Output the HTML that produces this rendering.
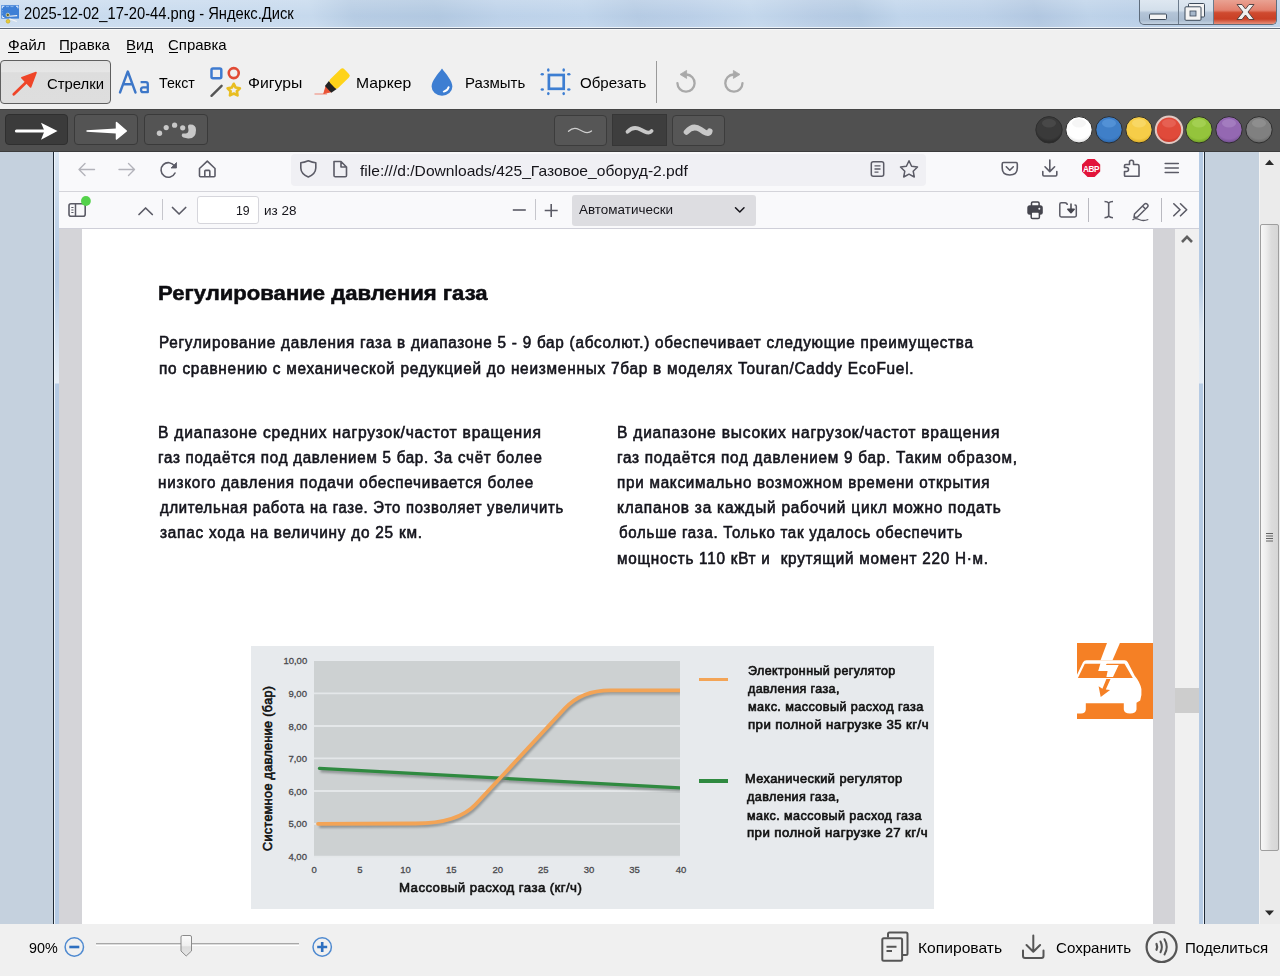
<!DOCTYPE html>
<html><head><meta charset="utf-8"><title>Яндекс.Диск</title>
<style>
html,body{margin:0;padding:0}
body{width:1280px;height:976px;position:relative;overflow:hidden;background:#f0f0f0;font-family:"Liberation Sans",sans-serif}
.t{position:absolute;white-space:pre;line-height:1;transform-origin:0 0}
.r{position:absolute}
.s{position:absolute;overflow:visible}
</style></head><body>
<div class="r" style="left:0px;top:0px;width:1280px;height:27px;background:linear-gradient(72deg,#c8daee 0px,#c3d7ec 300px,#b2c9e2 340px,#adc5df 420px,#b9cfe8 480px,#bcd2ea 560px,#b1c8e2 610px,#b6cce6 660px,#c0d5eb 720px,#b3c9e3 780px,#aec6e0 820px,#bcd2ea 860px,#b8cee7 940px,#adc4df 990px,#bad0e8 1040px,#b4cbe5 1100px,#bed3ea 1280px);"></div><div class="r" style="left:0px;top:0px;width:1280px;height:27px;background:linear-gradient(rgba(255,255,255,0.22),rgba(255,255,255,0.05) 60%,rgba(255,255,255,0.12));"></div><div class="r" style="left:0px;top:27px;width:1280px;height:1px;background:#eef4fa;"></div><div class="r" style="left:0px;top:28px;width:1280px;height:1px;background:#5d6776;"></div><div class="r" style="left:0px;top:29px;width:1280px;height:1px;background:#fafafa;"></div><svg class="s" style="left:0px;top:3px;" width="24" height="22" viewBox="0 3 24 22"><rect x="1.2" y="5.2" width="17.8" height="13.4" fill="#3d7fd6"/><path d="M2.3 8.3V6.3H4.3M16 6.3H17.9V8.3M2.3 15.5V17.5H4.3" fill="none" stroke="#e8f2ff" stroke-width="1"/><path d="M6 6.6H9M10.5 6.6H13.5M2.6 10.2V11.2M2.6 12.5V13.5" stroke="#8fbaf0" stroke-width="0.9"/><path d="M9.3 16.2L17.2 15.6M9.3 18.8L16.8 21.6" stroke="#f4f4f4" stroke-width="1.1"/><circle cx="7.8" cy="14.9" r="1.7" fill="#6b6420" stroke="#f0f0d0" stroke-width="0.7"/><circle cx="8" cy="21.3" r="1.9" fill="#e6cc3a" stroke="#c2a420" stroke-width="0.6"/></svg><div class="t" id="t1" style="left:24.34px;top:6.36px;font-size:16px;color:#000;transform:scaleX(0.9201);">2025-12-02_17-20-44.png - Яндекс.Диск</div><div class="r" style="left:1139px;top:-1px;width:136px;height:25px;border:1px solid #5e6c7c;border-top:none;border-radius:0 0 5px 5px;overflow:hidden;background:linear-gradient(#dfe8f1 0%,#d3dfeb 45%,#b3c4d7 55%,#aabcd0 85%,#c3d2e2 100%)"><div style="position:absolute;left:74px;top:0;width:62px;height:25px;background:linear-gradient(#eaa596 0%,#e2806d 45%,#cf4a2f 55%,#c93f25 80%,#e7907b 100%)"></div><div style="position:absolute;left:38px;top:0;width:1px;height:25px;background:#6c7b8c"></div><div style="position:absolute;left:73px;top:0;width:1px;height:25px;background:#6c7b8c"></div></div><svg class="s" style="left:1140px;top:0px;" width="140" height="26" viewBox="1140 0 140 26"><rect x="1149.5" y="14" width="17" height="5.5" rx="1" fill="#f4f4f4" stroke="#3d4a5a" stroke-width="1"/><rect x="1188.5" y="3.5" width="16" height="13.5" rx="1" fill="#f4f4f4" stroke="#3d4a5a" stroke-width="1"/><rect x="1185" y="6.8" width="16" height="13.5" rx="1" fill="#f4f4f4" stroke="#3d4a5a" stroke-width="1"/><rect x="1190" y="11" width="6" height="5" fill="#a7b8cb" stroke="#3d4a5a" stroke-width="0.8"/><path d="M1237 4.5h5l3.5 4.5l3.5-4.5h5l-6 7.5l6 7.5h-5l-3.5-4.5l-3.5 4.5h-5l6-7.5z" fill="#f0f0f0" stroke="#4a3a3a" stroke-width="0.9"/></svg><div class="t" id="t2" style="left:7.67px;top:37.30px;font-size:15px;color:#000;transform:scaleX(1.0224);">Файл</div><div class="t" id="t3" style="left:59.10px;top:37.30px;font-size:15px;color:#000;transform:scaleX(1.0063);">Правка</div><div class="t" id="t4" style="left:126.48px;top:37.30px;font-size:15px;color:#000;transform:scaleX(0.9998);">Вид</div><div class="t" id="t5" style="left:168.10px;top:37.30px;font-size:15px;color:#000;transform:scaleX(0.9966);">Справка</div><div class="r" style="left:8px;top:51.5px;width:11px;height:1px;background:#000;"></div><div class="r" style="left:60px;top:51.5px;width:9.5px;height:1px;background:#000;"></div><div class="r" style="left:127px;top:51.5px;width:8.5px;height:1px;background:#000;"></div><div class="r" style="left:168.5px;top:51.5px;width:9.5px;height:1px;background:#000;"></div><div class="r" style="left:0px;top:60px;width:109px;height:42px;border:1px solid #5f5f5f;border-radius:4px;background:linear-gradient(#e2e2e2 0%,#e6e6e6 25%,#dddddd 28%,#dedede 100%)"></div><svg class="s" style="left:8px;top:68px;" width="34" height="32" viewBox="8 68 34 32"><path d="M13.8 94.3L28 80.5" stroke="#ef4528" stroke-width="2.8" stroke-linecap="round"/><path d="M21.8 77.8L36 72.6L30.6 87Z" fill="#ef4528" stroke="#ef4528" stroke-width="1.6" stroke-linejoin="round"/></svg><div class="t" id="t6" style="left:47.15px;top:75.80px;font-size:15px;color:#000;transform:scaleX(0.9909);">Стрелки</div><svg class="s" style="left:116px;top:66px;" width="36" height="30" viewBox="116 66 36 30"><path d="M120 92.5L127.8 71.5L135.5 92.5M123.5 84.3H132" fill="none" stroke="#3d77c8" stroke-width="2.4" stroke-linecap="round" stroke-linejoin="round"/><path d="M140.6 82.2H145.8Q147.8 82.2 147.8 84.2V92.2H143.2Q141 92.2 141 89.7Q141 87.3 143.2 87.3H147.8" fill="none" stroke="#3d77c8" stroke-width="2.3" stroke-linejoin="round"/></svg><div class="t" id="t7" style="left:158.57px;top:75.30px;font-size:15px;color:#000;transform:scaleX(0.9494);">Текст</div><svg class="s" style="left:206px;top:62px;" width="40" height="38" viewBox="206 62 40 38"><rect x="211.5" y="68.5" width="9.8" height="9.8" rx="1.5" fill="none" stroke="#3f7bd0" stroke-width="2.5"/><circle cx="233.75" cy="73.1" r="5" fill="none" stroke="#e14b35" stroke-width="2.6"/><path d="M211.5 95.8L221.6 85.8" stroke="#555" stroke-width="2.4" stroke-linecap="round"/><path d="M233.75 83.80L235.69 87.53L239.84 88.22L236.89 91.22L237.51 95.38L233.75 93.50L229.99 95.38L230.61 91.22L227.66 88.22L231.81 87.53Z" fill="none" stroke="#e8be22" stroke-width="2.7" stroke-linejoin="round"/></svg><div class="t" id="t8" style="left:248.15px;top:75.30px;font-size:15px;color:#000;transform:scaleX(1.0502);">Фигуры</div><svg class="s" style="left:312px;top:64px;" width="42" height="34" viewBox="312 64 42 34"><path d="M314.5 94H327" stroke="#f09080" stroke-width="1.1"/><g transform="translate(323.8,93.6) rotate(-44)"><path d="M0 0L6.5 -3.6V3.6Z" fill="#ea5436" stroke="#ea5436" stroke-width="1" stroke-linejoin="round"/><path d="M6 -4.6L12.5 -5.6V5.6L6 4.6Z" fill="#222"/><rect x="12" y="-5.9" width="19.8" height="11.8" rx="2.6" fill="#fed319"/></g></svg><div class="t" id="t9" style="left:356.10px;top:75.30px;font-size:15px;color:#000;transform:scaleX(1.0478);">Маркер</div><svg class="s" style="left:428px;top:64px;" width="28" height="36" viewBox="428 64 28 36"><path d="M442 68.4C446 74 452.4 80.5 452.4 86.6A10.2 8.9 0 0 1 431.6 86.6C431.6 80.5 438 74 442 68.4Z" fill="#3d7ed2"/><path d="M443.8 91.6Q447.6 90.6 448.6 87.2" fill="none" stroke="#fff" stroke-width="2" stroke-linecap="round"/></svg><div class="t" id="t10" style="left:465.10px;top:75.30px;font-size:15px;color:#000;transform:scaleX(0.9986);">Размыть</div><svg class="s" style="left:538px;top:64px;" width="36" height="36" viewBox="538 64 36 36"><rect x="548.9" y="75" width="14.8" height="13.8" fill="none" stroke="#3d7ed2" stroke-width="2.7"/><ellipse cx="548.3" cy="70" rx="1.3" ry="1.7" fill="#3d7ed2"/><ellipse cx="563.7" cy="70" rx="1.3" ry="1.7" fill="#3d7ed2"/><ellipse cx="548.3" cy="93.6" rx="1.3" ry="1.7" fill="#3d7ed2"/><ellipse cx="563.7" cy="93.6" rx="1.3" ry="1.7" fill="#3d7ed2"/><ellipse cx="542.3" cy="74.3" rx="1.7" ry="1.3" fill="#3d7ed2"/><ellipse cx="568.8" cy="74.3" rx="1.7" ry="1.3" fill="#3d7ed2"/><ellipse cx="542.3" cy="89.5" rx="1.7" ry="1.3" fill="#3d7ed2"/><ellipse cx="568.8" cy="89.5" rx="1.7" ry="1.3" fill="#3d7ed2"/></svg><div class="t" id="t11" style="left:579.67px;top:75.30px;font-size:15px;color:#000;transform:scaleX(1.0040);">Обрезать</div><div class="r" style="left:656px;top:61px;width:1px;height:42px;background:#9a9a9a;"></div><svg class="s" style="left:670px;top:66px;" width="80" height="34" viewBox="670 66 80 34"><path d="M677.4 83.1A8.6 8.6 0 1 0 686.4 74.5" fill="none" stroke="#a9a9a9" stroke-width="2.3" stroke-linecap="round"/><path d="M680 74.4L686.6 70.4L686.6 78.4Z" fill="#a9a9a9" stroke="#a9a9a9" stroke-width="0.8" stroke-linejoin="round"/><path d="M742.5 83.1A8.6 8.6 0 1 1 733.5 74.5" fill="none" stroke="#a9a9a9" stroke-width="2.3" stroke-linecap="round"/><path d="M740 74.4L733.4 70.4L733.4 78.4Z" fill="#a9a9a9" stroke="#a9a9a9" stroke-width="0.8" stroke-linejoin="round"/></svg><div class="r" style="left:0px;top:109px;width:1280px;height:43px;background:#505050;"></div><div class="r" style="left:0px;top:109px;width:1280px;height:1px;background:#454545;"></div><div class="r" style="left:0px;top:151px;width:1280px;height:1px;background:#3c3c3c;"></div><div class="r" style="left:5px;top:114px;width:63px;height:31px;background:#3b3b3b;border:1px solid #2f2f2f;border-radius:4px;box-sizing:border-box;"></div><div class="r" style="left:74px;top:114px;width:64px;height:31px;background:#545454;border:1px solid #3a3a3a;border-radius:4px;box-sizing:border-box;"></div><div class="r" style="left:144px;top:114px;width:64px;height:31px;background:#545454;border:1px solid #3a3a3a;border-radius:4px;box-sizing:border-box;"></div><svg class="s" style="left:10px;top:118px;" width="200" height="26" viewBox="10 118 200 26"><path d="M16.5 131H46" stroke="#fff" stroke-width="3.2" stroke-linecap="round"/><path d="M41 122.8L57.5 131L41 139.8L44.5 131Z" fill="#fff"/><path d="M86.5 130.2L116 128.5L116 133.5L86.5 131.8Z" fill="#fff"/><path d="M116.5 122.5L126.3 131L116.5 139Z" fill="#fff" stroke="#fff" stroke-width="1.5" stroke-linejoin="round"/><circle cx="159.5" cy="133.2" r="2.7" fill="#c8c8c8"/><circle cx="166.2" cy="127.6" r="2.6" fill="#c8c8c8"/><circle cx="174.6" cy="125.2" r="2.6" fill="#c8c8c8"/><circle cx="182.7" cy="127.8" r="2.6" fill="#c8c8c8"/><path d="M189.5 124.5Q196 124 196 130Q196 139 188 138.5L183.5 137.5Q180.5 136 182.5 133.5L186 133.5Q188.5 133 188.5 130L188 127Q187.8 124.8 189.5 124.5Z" fill="#c8c8c8"/></svg><div class="r" style="left:554px;top:115px;width:53px;height:31px;background:#565656;border:1px solid #3c3c3c;border-radius:4px;box-sizing:border-box;"></div><div class="r" style="left:612px;top:114px;width:55px;height:32px;background:#3e3e3e;border:1px solid #363636;box-sizing:border-box;"></div><div class="r" style="left:672px;top:115px;width:53px;height:31px;background:#565656;border:1px solid #3c3c3c;border-radius:4px;box-sizing:border-box;"></div><svg class="s" style="left:550px;top:110px;" width="180" height="40" viewBox="550 110 180 40"><path d="M568.5 131.2Q573.5 126.5 579 129.5L583 131.5Q588 134 591.5 131" fill="none" stroke="#cfcfcf" stroke-width="1.3" stroke-linecap="round"/><path d="M627.5 131.8Q633.5 125.5 640.5 129.5L644.5 131.5Q649.5 134 651.6 131" fill="none" stroke="#c8c8c8" stroke-width="3.8" stroke-linecap="round"/><path d="M686.5 132Q693 124.5 700.5 129.5L704 131.8Q709 134.8 709.8 131.2" fill="none" stroke="#c8c8c8" stroke-width="5.6" stroke-linecap="round"/></svg><svg class="s" style="left:1030px;top:112px;" width="250" height="38" viewBox="1030 112 250 38"><defs><radialGradient id="cg0" cx="0.5" cy="0.35" r="0.65"><stop offset="0" stop-color="#3a3a3a"/><stop offset="0.75" stop-color="#3a3a3a"/><stop offset="1" stop-color="#262626"/></radialGradient><radialGradient id="cg1" cx="0.5" cy="0.35" r="0.65"><stop offset="0" stop-color="#ffffff"/><stop offset="0.75" stop-color="#ffffff"/><stop offset="1" stop-color="#d8d8d8"/></radialGradient><radialGradient id="cg2" cx="0.5" cy="0.35" r="0.65"><stop offset="0" stop-color="#3f7fc8"/><stop offset="0.75" stop-color="#3f7fc8"/><stop offset="1" stop-color="#2a64a8"/></radialGradient><radialGradient id="cg3" cx="0.5" cy="0.35" r="0.65"><stop offset="0" stop-color="#f6cd48"/><stop offset="0.75" stop-color="#f6cd48"/><stop offset="1" stop-color="#d8a923"/></radialGradient><radialGradient id="cg4" cx="0.5" cy="0.35" r="0.65"><stop offset="0" stop-color="#e04a3a"/><stop offset="0.75" stop-color="#e04a3a"/><stop offset="1" stop-color="#bf3426"/></radialGradient><radialGradient id="cg5" cx="0.5" cy="0.35" r="0.65"><stop offset="0" stop-color="#94c43c"/><stop offset="0.75" stop-color="#94c43c"/><stop offset="1" stop-color="#6e9d25"/></radialGradient><radialGradient id="cg6" cx="0.5" cy="0.35" r="0.65"><stop offset="0" stop-color="#9468b2"/><stop offset="0.75" stop-color="#9468b2"/><stop offset="1" stop-color="#6f4d8d"/></radialGradient><radialGradient id="cg7" cx="0.5" cy="0.35" r="0.65"><stop offset="0" stop-color="#808080"/><stop offset="0.75" stop-color="#808080"/><stop offset="1" stop-color="#636363"/></radialGradient></defs><circle cx="1049" cy="129.8" r="13.2" fill="url(#cg0)" stroke="#2e2e2e" stroke-width="1"/><ellipse cx="1049" cy="123.30000000000001" rx="7" ry="4.2" fill="#4e4e4e" opacity="0.7"/><circle cx="1079" cy="129.8" r="13.2" fill="url(#cg1)" stroke="#2e2e2e" stroke-width="1"/><ellipse cx="1079" cy="123.30000000000001" rx="7" ry="4.2" fill="#f2f2f2" opacity="0.7"/><circle cx="1109" cy="129.8" r="13.2" fill="url(#cg2)" stroke="#2e2e2e" stroke-width="1"/><ellipse cx="1109" cy="123.30000000000001" rx="7" ry="4.2" fill="#5b98db" opacity="0.7"/><circle cx="1139" cy="129.8" r="13.2" fill="url(#cg3)" stroke="#2e2e2e" stroke-width="1"/><ellipse cx="1139" cy="123.30000000000001" rx="7" ry="4.2" fill="#fadb70" opacity="0.7"/><circle cx="1169" cy="129.8" r="13.2" fill="url(#cg4)" stroke="#e2c8c2" stroke-width="2"/><ellipse cx="1169" cy="123.30000000000001" rx="7" ry="4.2" fill="#e86a5c" opacity="0.7"/><circle cx="1199" cy="129.8" r="13.2" fill="url(#cg5)" stroke="#2e2e2e" stroke-width="1"/><ellipse cx="1199" cy="123.30000000000001" rx="7" ry="4.2" fill="#aad45a" opacity="0.7"/><circle cx="1229" cy="129.8" r="13.2" fill="url(#cg6)" stroke="#2e2e2e" stroke-width="1"/><ellipse cx="1229" cy="123.30000000000001" rx="7" ry="4.2" fill="#aa84c4" opacity="0.7"/><circle cx="1259" cy="129.8" r="13.2" fill="url(#cg7)" stroke="#2e2e2e" stroke-width="1"/><ellipse cx="1259" cy="123.30000000000001" rx="7" ry="4.2" fill="#949494" opacity="0.7"/></svg><div class="r" style="left:0px;top:152px;width:1280px;height:772px;background:#c5d1de;"></div><div class="r" style="left:53px;top:152px;width:1px;height:772px;background:#1f2a36;"></div><div class="r" style="left:1204px;top:152px;width:1px;height:772px;background:#1f2a36;"></div><div class="r" style="left:54px;top:152px;width:1px;height:772px;background:#eef4fa;"></div><div class="r" style="left:55px;top:152px;width:4px;height:772px;background:linear-gradient(#dce7f3 0px,#c4d6ea 60px,#b6cbe4 110px,#b6cbe4 130px,#e4edf6 228px,#e8eff7 231px,#b6cbe4 232px,#b6cbe4 100%);"></div><div class="r" style="left:1199px;top:152px;width:4px;height:772px;background:linear-gradient(#b6cbe4 0px,#b6cbe4 128px,#dfe8f2 180px,#e4ecf5 231px,#b6cbe4 232px,#b6cbe4 100%);"></div><div class="r" style="left:1203px;top:152px;width:1px;height:772px;background:#eef4fa;"></div><div class="r" style="left:59px;top:152px;width:1140px;height:39px;background:#f9f9fb;"></div><div class="r" style="left:59px;top:191px;width:1140px;height:1px;background:#d4d4da;"></div><div class="r" style="left:59px;top:192px;width:1140px;height:36px;background:#f9f9fb;"></div><div class="r" style="left:59px;top:228px;width:1140px;height:1px;background:#cfcfd8;"></div><div class="r" style="left:291px;top:153.5px;width:635px;height:32px;background:#f0f0f4;border-radius:4px;"></div><svg class="s" style="left:70px;top:155px;" width="300" height="30" viewBox="70 155 300 30"><path d="M79 169.5H94.5M85 163.5L79 169.5L85 175.5" fill="none" stroke="#b3b3ba" stroke-width="1.4" stroke-linecap="round" stroke-linejoin="round"/><path d="M119 169.5H134.5M128.5 163.5L134.5 169.5L128.5 175.5" fill="none" stroke="#b3b3ba" stroke-width="1.4" stroke-linecap="round" stroke-linejoin="round"/><path d="M174.5 166A7.3 7.3 0 1 0 175 173" fill="none" stroke="#5b5b66" stroke-width="1.6" stroke-linecap="round"/><path d="M176.5 162.5V168H171Z" fill="#5b5b66" stroke="#5b5b66" stroke-width="0.8" stroke-linejoin="round"/><path d="M199.5 168.5L207.3 161.2L215 168.5V175.8Q215 176.8 214 176.8H200.5Q199.5 176.8 199.5 175.8Z" fill="none" stroke="#5b5b66" stroke-width="1.6" stroke-linejoin="round"/><path d="M204.8 176.8V171.2Q204.8 170.4 205.6 170.4H209Q209.8 170.4 209.8 171.2V176.8" fill="none" stroke="#5b5b66" stroke-width="1.6"/><path d="M308.3 160.8Q304 162.6 300.8 162.8V168Q301 174 308.3 177Q315.6 174 315.8 168V162.8Q312.6 162.6 308.3 160.8Z" fill="none" stroke="#5b5b66" stroke-width="1.6" stroke-linejoin="round"/><path d="M334 161.5H341L346.5 167V175.5Q346.5 176.8 345.2 176.8H335.3Q334 176.8 334 175.5Z M341 161.5V167H346.5" fill="none" stroke="#5b5b66" stroke-width="1.6" stroke-linejoin="round"/></svg><div class="t" id="t12" style="left:360.05px;top:163.10px;font-size:15px;color:#15141a;transform:scaleX(1.0400);">file:///d:/Downloads/425_Газовое_оборуд-2.pdf</div><svg class="s" style="left:860px;top:155px;" width="70" height="30" viewBox="860 155 70 30"><rect x="871.3" y="161.8" width="12.4" height="14.5" rx="2" fill="none" stroke="#5b5b66" stroke-width="1.5"/><path d="M874.5 165.8H880.5M874.5 169H880.5M874.5 172.2H878.5" stroke="#5b5b66" stroke-width="1.3"/><path d="M909 160.8L911.6 166.3L917.5 167L913.2 171.2L914.3 177L909 174.2L903.7 177L904.8 171.2L900.5 167L906.4 166.3Z" fill="none" stroke="#5b5b66" stroke-width="1.5" stroke-linejoin="round"/></svg><svg class="s" style="left:995px;top:155px;" width="195" height="30" viewBox="995 155 195 30"><path d="M1003.5 162.5H1016Q1017.3 162.5 1017.3 164V168Q1017.3 175 1009.8 175Q1002.2 175 1002.2 168V164Q1002.2 162.5 1003.5 162.5Z" fill="none" stroke="#5b5b66" stroke-width="1.6"/><path d="M1006.3 166.8L1009.8 170.2L1013.3 166.8" fill="none" stroke="#5b5b66" stroke-width="1.6" stroke-linecap="round" stroke-linejoin="round"/><path d="M1049.8 160V171.5M1045 166.8L1049.8 171.6L1054.6 166.8M1042.8 171.5V174.8Q1042.8 176 1044 176H1055.6Q1056.8 176 1056.8 174.8V171.5" fill="none" stroke="#5b5b66" stroke-width="1.6" stroke-linecap="round" stroke-linejoin="round"/><path d="M1087.6 159L1094.6 159L1100.2 164.4L1100.2 171.6L1094.6 177L1087.6 177L1082 171.6L1082 164.4Z" fill="#e2143a"/><text x="1091.1" y="171.8" font-family="Liberation Sans" font-weight="700" font-size="8.2" fill="#fff" text-anchor="middle" letter-spacing="-0.3">ABP</text><path d="M1129.5 164.5V162Q1129.5 160.2 1131.5 160.2Q1133.5 160.2 1133.5 162V164.5H1137.5Q1139 164.5 1139 166V176.3H1125.3Q1124.5 176.3 1124.5 175.5V171.5H1126.5Q1128.5 171.5 1128.5 169.5Q1128.5 167.5 1126.5 167.5H1124.5V165.8Q1124.5 164.5 1125.8 164.5Z" fill="none" stroke="#5b5b66" stroke-width="1.6" stroke-linejoin="round"/><path d="M1165.2 163.5H1178.3M1165.2 168H1178.3M1165.2 172.5H1178.3" stroke="#5b5b66" stroke-width="1.6" stroke-linecap="round"/></svg><svg class="s" style="left:64px;top:194px;" width="30" height="28" viewBox="64 194 30 28"><rect x="69" y="203.8" width="16.2" height="12.5" rx="2" fill="none" stroke="#5b5b66" stroke-width="1.6"/><path d="M75.5 204V216" stroke="#5b5b66" stroke-width="1.5"/><path d="M71.3 207.5H73.5M71.3 210H73.5M71.3 212.5H73.5" stroke="#5b5b66" stroke-width="1.1"/><circle cx="85.9" cy="201" r="4.9" fill="#54d24b"/></svg><svg class="s" style="left:130px;top:194px;" width="140" height="30" viewBox="130 194 140 30"><path d="M139 214.5L145.6 208L152.3 214.5" fill="none" stroke="#5b5b66" stroke-width="1.7" stroke-linecap="round" stroke-linejoin="round"/><path d="M172.5 207.5L179.1 214L185.7 207.5" fill="none" stroke="#5b5b66" stroke-width="1.7" stroke-linecap="round" stroke-linejoin="round"/></svg><div class="r" style="left:162px;top:199px;width:1px;height:21px;background:#c6c6cc;"></div><div class="r" style="left:197px;top:195.5px;width:61.5px;height:28px;background:#fff;border:1px solid #d6d6dc;border-radius:3px;box-sizing:border-box;"></div><div class="t" id="t13" style="left:236.34px;top:203.77px;font-size:13.5px;color:#15141a;transform:scaleX(0.9068);">19</div><div class="t" id="t14" style="left:264.10px;top:203.77px;font-size:13.5px;color:#15141a;transform:scaleX(0.9992);">из 28</div><svg class="s" style="left:505px;top:198px;" width="60" height="26" viewBox="505 198 60 26"><path d="M512.8 210H525.8" stroke="#5b5b66" stroke-width="1.6"/><path d="M544.7 210.5H557.7M551.2 204V217" stroke="#5b5b66" stroke-width="1.6"/></svg><div class="r" style="left:535px;top:199px;width:1px;height:21px;background:#c6c6cc;"></div><div class="r" style="left:571.5px;top:194.7px;width:184.5px;height:31px;background:#dddde1;border-radius:3px;"></div><div class="t" id="t15" style="left:578.76px;top:203.17px;font-size:13.5px;color:#15141a;transform:scaleX(0.9965);">Автоматически</div><svg class="s" style="left:730px;top:202px;" width="20" height="16" viewBox="730 202 20 16"><path d="M735.5 207.8L739.8 212L744 207.8" fill="none" stroke="#15141a" stroke-width="1.5" stroke-linecap="round" stroke-linejoin="round"/></svg><svg class="s" style="left:1020px;top:196px;" width="175" height="28" viewBox="1020 196 175 28"><rect x="1031.5" y="202" width="7.6" height="5" rx="1.3" fill="none" stroke="#45454e" stroke-width="1.5"/><rect x="1027.3" y="205.3" width="15.5" height="9.4" rx="2.5" fill="#45454e"/><circle cx="1039.3" cy="208.7" r="1" fill="#f9f9fb"/><rect x="1031.2" y="212" width="8.2" height="6.6" rx="1.3" fill="#f9f9fb" stroke="#45454e" stroke-width="1.5"/><path d="M1067.3 205Q1067 202.8 1065 202.8H1061.3Q1059.8 202.8 1059.8 204.3V215.6Q1059.8 217 1061.3 217H1074.8Q1076.3 217 1076.3 215.6V206.3Q1076.3 205 1075 205H1074.5" fill="none" stroke="#5b5b66" stroke-width="1.5"/><path d="M1071 203.5V211M1067.8 209.3L1071 212.8L1074.2 209.3Z" fill="#45454e" stroke="#45454e" stroke-width="1.5" stroke-linejoin="round"/><path d="M1104.5 201.5Q1107.5 201.5 1108.7 203V216Q1107.5 217.8 1104.5 217.8M1113 201.5Q1110 201.5 1108.7 203M1113 217.8Q1110 217.8 1108.7 216" fill="none" stroke="#5b5b66" stroke-width="1.6"/><path d="M1134.5 214L1144.3 204.2Q1145.8 202.7 1147.3 204.2Q1148.8 205.7 1147.3 207.2L1137.5 217L1134 217.5Z M1142.5 206L1145.5 209" fill="none" stroke="#5b5b66" stroke-width="1.5" stroke-linejoin="round"/><path d="M1132.5 220Q1135 217.5 1139 219.5Q1143 221.5 1148.3 219.5" fill="none" stroke="#5b5b66" stroke-width="1.3"/><path d="M1173.8 203.8L1180 209.8L1173.8 215.8M1180.5 203.8L1186.7 209.8L1180.5 215.8" fill="none" stroke="#5b5b66" stroke-width="1.6" stroke-linecap="round" stroke-linejoin="round"/></svg><div class="r" style="left:1088px;top:198px;width:1px;height:24px;background:#b9b9c0;"></div><div class="r" style="left:1161px;top:198px;width:1px;height:24px;background:#b9b9c0;"></div><div class="r" style="left:59px;top:229px;width:23px;height:695px;background:#d4d4d8;"></div><div class="r" style="left:82px;top:229px;width:1071px;height:695px;background:#ffffff;"></div><div class="r" style="left:1153px;top:229px;width:22px;height:695px;background:#d3d3d7;"></div><div class="r" style="left:1175px;top:229px;width:24px;height:695px;background:#f0f0f0;"></div><div class="r" style="left:1175px;top:688px;width:24px;height:25px;background:#cdcdcd;"></div><svg class="s" style="left:1178px;top:230px;" width="18" height="16" viewBox="1178 230 18 16"><path d="M1182 242L1187 236.8L1192 242" fill="none" stroke="#606060" stroke-width="2.6"/></svg><div class="r" style="left:1259px;top:152px;width:21px;height:772px;background:#ebebeb;border-left:1px solid #f4f4f4;box-sizing:border-box;"></div><svg class="s" style="left:1260px;top:155px;" width="20" height="14" viewBox="1260 155 20 14"><path d="M1265 165L1269.5 159.8L1274 165Z" fill="#2a2a2a"/></svg><svg class="s" style="left:1260px;top:905px;" width="20" height="14" viewBox="1260 905 20 14"><path d="M1265 910.5L1269.5 915.5L1274 910.5Z" fill="#2a2a2a"/></svg><div class="r" style="left:1260px;top:224px;width:19px;height:627px;background:linear-gradient(90deg,#f7f7f7 0%,#ededed 30%,#dcdcdc 60%,#d6d6d6 100%);border:1px solid #9e9e9e;border-radius:2px;box-sizing:border-box;"></div><svg class="s" style="left:1260px;top:530px;" width="20" height="16" viewBox="1260 530 20 16"><path d="M1266 533.5H1273M1266 536H1273M1266 538.5H1273M1266 541H1273" stroke="#555" stroke-width="0.9"/></svg><div class="r" style="left:0px;top:924px;width:1280px;height:52px;background:#f0f0f0;"></div><div class="t" id="t16" style="left:29.48px;top:940.30px;font-size:15px;color:#000;transform:scaleX(0.9568);">90%</div><svg class="s" style="left:60px;top:932px;" width="280" height="32" viewBox="60 932 280 32"><circle cx="74.3" cy="947" r="9.2" fill="none" stroke="#4f8ad0" stroke-width="1.5"/><path d="M69.3 947H79.3" stroke="#2d6fc0" stroke-width="2.6"/><circle cx="322.2" cy="947" r="9.2" fill="none" stroke="#4f8ad0" stroke-width="1.5"/><path d="M317.2 947H327.2M322.2 942V952" stroke="#2d6fc0" stroke-width="2.6"/></svg><div class="r" style="left:96px;top:943px;width:203px;height:3px;background:#dcdcdc;border-top:1px solid #a8a8a8;border-bottom:1px solid #fff;box-sizing:border-box;"></div><svg class="s" style="left:175px;top:932px;" width="24" height="28" viewBox="175 932 24 28"><defs><linearGradient id="th" x1="0" y1="0" x2="0" y2="1"><stop offset="0" stop-color="#fbfbfb"/><stop offset="0.5" stop-color="#efefef"/><stop offset="0.55" stop-color="#dcdcdc"/><stop offset="1" stop-color="#e6e6e6"/></linearGradient></defs><path d="M181 937Q181 935.5 182.5 935.5H190Q191.5 935.5 191.5 937V951L186.2 956L181 951Z" fill="url(#th)" stroke="#8b8b8b" stroke-width="1"/></svg><svg class="s" style="left:876px;top:928px;" width="300" height="40" viewBox="876 928 300 40"><path d="M888 937.5V934Q888 932.5 889.5 932.5H906Q907.5 932.5 907.5 934V953.5Q907.5 955 906 955H902.5" fill="none" stroke="#555" stroke-width="2"/><rect x="882.3" y="938.2" width="19.8" height="22.6" rx="1.5" fill="#f0f0f0" stroke="#555" stroke-width="2"/><path d="M886.5 946.8H896.5M886.5 951H892" stroke="#555" stroke-width="1.9"/><path d="M1033.3 935.5V951.5M1026.5 945L1033.3 951.8L1040.1 945M1023 950.5V956Q1023 958 1025 958H1041.5Q1043.5 958 1043.5 956V950.5" fill="none" stroke="#555" stroke-width="2" stroke-linecap="round" stroke-linejoin="round"/><circle cx="1161.6" cy="947" r="15" fill="none" stroke="#555" stroke-width="2.2"/><path d="M1156.5 944Q1157.8 946.8 1156.5 949.8" fill="none" stroke="#555" stroke-width="2.2" stroke-linecap="round"/><path d="M1160.5 941.5Q1163.2 946.8 1160.5 952.3" fill="none" stroke="#555" stroke-width="2" stroke-linecap="round"/><path d="M1164.5 939.2Q1169 946.8 1164.5 954.5" fill="none" stroke="#555" stroke-width="2" stroke-linecap="round"/></svg><div class="t" id="t17" style="left:917.72px;top:940.30px;font-size:15px;color:#000;transform:scaleX(1.0408);">Копировать</div><div class="t" id="t18" style="left:1056.10px;top:940.30px;font-size:15px;color:#000;transform:scaleX(1.0077);">Сохранить</div><div class="t" id="t19" style="left:1184.96px;top:940.30px;font-size:15px;color:#000;transform:scaleX(1.0050);">Поделиться</div><div class="t" id="t20" style="left:158.34px;top:283.69px;font-size:19.5px;color:#0c0c10;font-weight:700;transform:scaleX(1.1333);-webkit-text-stroke:0.5px currentColor;">Регулирование давления газа</div><div class="t" id="t21" style="left:158.72px;top:335.36px;font-size:16px;color:#14141c;transform:scaleX(0.9541);-webkit-text-stroke:0.6px currentColor;letter-spacing:0.8px;">Регулирование давления газа в диапазоне 5 - 9 бар (абсолют.) обеспечивает следующие преимущества</div><div class="t" id="t22" style="left:158.53px;top:360.76px;font-size:16px;color:#14141c;transform:scaleX(0.9586);-webkit-text-stroke:0.6px currentColor;letter-spacing:0.8px;">по сравнению с механической редукцией до неизменных 7бар в моделях Touran/Caddy EcoFuel.</div><div class="t" id="t23" style="left:157.96px;top:424.56px;font-size:16px;color:#14141c;transform:scaleX(0.9756);-webkit-text-stroke:0.6px currentColor;letter-spacing:0.8px;">В диапазоне средних нагрузок/частот вращения</div><div class="t" id="t24" style="left:157.96px;top:449.76px;font-size:16px;color:#14141c;transform:scaleX(0.9439);-webkit-text-stroke:0.6px currentColor;letter-spacing:0.8px;">газ подаётся под давлением 5 бар. За счёт более</div><div class="t" id="t25" style="left:157.96px;top:475.06px;font-size:16px;color:#14141c;transform:scaleX(0.9511);-webkit-text-stroke:0.6px currentColor;letter-spacing:0.8px;">низкого давления подачи обеспечивается более</div><div class="t" id="t26" style="left:159.76px;top:500.26px;font-size:16px;color:#14141c;transform:scaleX(0.9252);-webkit-text-stroke:0.6px currentColor;letter-spacing:0.8px;">длительная работа на газе. Это позволяет увеличить</div><div class="t" id="t27" style="left:159.76px;top:525.46px;font-size:16px;color:#14141c;transform:scaleX(0.9592);-webkit-text-stroke:0.6px currentColor;letter-spacing:0.8px;">запас хода на величину до 25 км.</div><div class="t" id="t28" style="left:616.96px;top:424.56px;font-size:16px;color:#14141c;transform:scaleX(0.9733);-webkit-text-stroke:0.6px currentColor;letter-spacing:0.8px;">В диапазоне высоких нагрузок/частот вращения</div><div class="t" id="t29" style="left:616.96px;top:449.76px;font-size:16px;color:#14141c;transform:scaleX(0.9541);-webkit-text-stroke:0.6px currentColor;letter-spacing:0.8px;">газ подаётся под давлением 9 бар. Таким образом,</div><div class="t" id="t30" style="left:616.96px;top:475.06px;font-size:16px;color:#14141c;transform:scaleX(0.9498);-webkit-text-stroke:0.6px currentColor;letter-spacing:0.8px;">при максимально возможном времени открытия</div><div class="t" id="t31" style="left:616.96px;top:500.26px;font-size:16px;color:#14141c;transform:scaleX(0.9631);-webkit-text-stroke:0.6px currentColor;letter-spacing:0.8px;">клапанов за каждый рабочий цикл можно подать</div><div class="t" id="t32" style="left:618.76px;top:525.46px;font-size:16px;color:#14141c;transform:scaleX(0.9375);-webkit-text-stroke:0.6px currentColor;letter-spacing:0.8px;">больше газа. Только так удалось обеспечить</div><div class="t" id="t33" style="left:616.96px;top:550.66px;font-size:16px;color:#14141c;transform:scaleX(0.9536);-webkit-text-stroke:0.6px currentColor;letter-spacing:0.8px;">мощность 110 кВт и  крутящий момент 220 Н·м.</div><div class="r" style="left:251px;top:646px;width:683px;height:263px;background:#e7eaed;"></div><div class="r" style="left:314px;top:661px;width:366px;height:195px;background:#cdd1d2;"></div><svg class="s" style="left:300px;top:650px;" width="400" height="220" viewBox="300 650 400 220"><defs><filter id="sh" x="-10%%" y="-10%%" width="120%%" height="130%%"><feGaussianBlur stdDeviation="1.3"/></filter><clipPath id="pc"><rect x="314" y="661" width="366" height="195"/></clipPath></defs><path d="M314 693.3 H680" stroke="#e4e7e9" stroke-width="1.8"/><path d="M314 726 H680" stroke="#e4e7e9" stroke-width="1.8"/><path d="M314 758.4 H680" stroke="#e4e7e9" stroke-width="1.8"/><path d="M314 791 H680" stroke="#e4e7e9" stroke-width="1.8"/><path d="M314 823.8 H680" stroke="#e4e7e9" stroke-width="1.8"/><path d="M314 856.6 H680" stroke="#e4e7e9" stroke-width="1.8"/><g clip-path="url(#pc)"><path d="M319.4 768.4 L 680 787.9" transform="translate(1.2,2.2)" fill="none" stroke="#7d8283" stroke-width="3.6" opacity="0.75" filter="url(#sh)"/><path d="M319.4 768.4 L 680 787.9" fill="none" stroke="#2f8a40" stroke-width="3.2" stroke-linecap="round"/><path d="M318 823.8 C370 823.7, 395 823.6, 415 823.5 Q457.8 823.6 476 804 L565 708.3 Q581.8 690.3 610 690.3 L680 690.3" transform="translate(1.2,2.2)" fill="none" stroke="#7d8283" stroke-width="3.8" opacity="0.75" filter="url(#sh)"/><path d="M318 823.8 C370 823.7, 395 823.6, 415 823.5 Q457.8 823.6 476 804 L565 708.3 Q581.8 690.3 610 690.3 L680 690.3" fill="none" stroke="#f3a456" stroke-width="3.8" stroke-linecap="round"/></g></svg><div class="t" id="t34" style="left:283.40px;top:656.36px;font-size:9.5px;color:#4a4a4e;-webkit-text-stroke:0.3px currentColor;">10,00</div><div class="t" id="t35" style="left:288.43px;top:688.96px;font-size:9.5px;color:#4a4a4e;-webkit-text-stroke:0.3px currentColor;">9,00</div><div class="t" id="t36" style="left:288.43px;top:721.56px;font-size:9.5px;color:#4a4a4e;-webkit-text-stroke:0.3px currentColor;">8,00</div><div class="t" id="t37" style="left:288.43px;top:754.16px;font-size:9.5px;color:#4a4a4e;-webkit-text-stroke:0.3px currentColor;">7,00</div><div class="t" id="t38" style="left:288.43px;top:786.76px;font-size:9.5px;color:#4a4a4e;-webkit-text-stroke:0.3px currentColor;">6,00</div><div class="t" id="t39" style="left:288.43px;top:819.36px;font-size:9.5px;color:#4a4a4e;-webkit-text-stroke:0.3px currentColor;">5,00</div><div class="t" id="t40" style="left:288.43px;top:851.96px;font-size:9.5px;color:#4a4a4e;-webkit-text-stroke:0.3px currentColor;">4,00</div><div class="t" id="t41" style="left:311.60px;top:865.16px;font-size:9.5px;color:#4a4a4e;-webkit-text-stroke:0.3px currentColor;">0</div><div class="t" id="t42" style="left:357.22px;top:865.16px;font-size:9.5px;color:#4a4a4e;-webkit-text-stroke:0.3px currentColor;">5</div><div class="t" id="t43" style="left:400.32px;top:865.16px;font-size:9.5px;color:#4a4a4e;-webkit-text-stroke:0.3px currentColor;">10</div><div class="t" id="t44" style="left:445.94px;top:865.16px;font-size:9.5px;color:#4a4a4e;-webkit-text-stroke:0.3px currentColor;">15</div><div class="t" id="t45" style="left:492.46px;top:865.16px;font-size:9.5px;color:#4a4a4e;-webkit-text-stroke:0.3px currentColor;">20</div><div class="t" id="t46" style="left:538.08px;top:865.16px;font-size:9.5px;color:#4a4a4e;-webkit-text-stroke:0.3px currentColor;">25</div><div class="t" id="t47" style="left:583.70px;top:865.16px;font-size:9.5px;color:#4a4a4e;-webkit-text-stroke:0.3px currentColor;">30</div><div class="t" id="t48" style="left:629.32px;top:865.16px;font-size:9.5px;color:#4a4a4e;-webkit-text-stroke:0.3px currentColor;">35</div><div class="t" id="t49" style="left:675.84px;top:865.16px;font-size:9.5px;color:#4a4a4e;-webkit-text-stroke:0.3px currentColor;">40</div><div class="t" id="t50" style="left:399.15px;top:880.87px;font-size:13.5px;color:#111;transform:scaleX(0.9837);-webkit-text-stroke:0.6px currentColor;letter-spacing:0.4px;">Массовый расход газа (кг/ч)</div><div class="t" style="left:261.00px;top:851.40px;font-size:13.5px;color:#111;-webkit-text-stroke:0.6px currentColor;letter-spacing:0.4px;transform-origin:0 0;transform:rotate(-90deg) scaleX(0.9291)">Системное давление (бар)</div><div class="r" style="left:699.2px;top:677.9px;width:29.3px;height:3.6px;background:#f3a456;"></div><div class="r" style="left:699.2px;top:779.4px;width:29.3px;height:3.4px;background:#2f8a40;"></div><div class="t" id="t51" style="left:747.76px;top:664.84px;font-size:12px;color:#111;transform:scaleX(1.0389);-webkit-text-stroke:0.6px currentColor;letter-spacing:0.4px;">Электронный регулятор</div><div class="t" id="t52" style="left:747.76px;top:682.84px;font-size:12px;color:#111;transform:scaleX(1.0389);-webkit-text-stroke:0.6px currentColor;letter-spacing:0.4px;">давления газа,</div><div class="t" id="t53" style="left:747.76px;top:700.84px;font-size:12px;color:#111;transform:scaleX(1.0520);-webkit-text-stroke:0.6px currentColor;letter-spacing:0.4px;">макс. массовый расход газа</div><div class="t" id="t54" style="left:747.76px;top:718.74px;font-size:12px;color:#111;transform:scaleX(1.1023);-webkit-text-stroke:0.6px currentColor;letter-spacing:0.4px;">при полной нагрузке 35 кг/ч</div><div class="t" id="t55" style="left:744.96px;top:773.44px;font-size:12px;color:#111;transform:scaleX(1.0666);-webkit-text-stroke:0.6px currentColor;letter-spacing:0.4px;">Механический регулятор</div><div class="t" id="t56" style="left:746.76px;top:791.44px;font-size:12px;color:#111;transform:scaleX(1.0479);-webkit-text-stroke:0.6px currentColor;letter-spacing:0.4px;">давления газа,</div><div class="t" id="t57" style="left:746.76px;top:809.54px;font-size:12px;color:#111;transform:scaleX(1.0472);-webkit-text-stroke:0.6px currentColor;letter-spacing:0.4px;">макс. массовый расход газа</div><div class="t" id="t58" style="left:746.76px;top:827.34px;font-size:12px;color:#111;transform:scaleX(1.1023);-webkit-text-stroke:0.6px currentColor;letter-spacing:0.4px;">при полной нагрузке 27 кг/ч</div><svg class="s" style="left:1077px;top:643px;" width="76" height="76" viewBox="1077 643 76 76"><rect x="1077" y="643" width="76" height="76" fill="#f58025"/><g transform="translate(1077,643)"><path d="M0 31.8L6 19.3Q7 17.2 9.5 17.2H47.5Q49.8 17.2 50.8 19.2L57.7 32.7Q63 39 64.4 46Q65 52 63.2 57.6L59.5 59.8V66.5Q59 70.6 53 70.6Q47.2 70.6 46.8 66.5V60.2H8.8V66.5Q8.5 70.4 4 70.4H0Z" fill="#fff"/><path d="M0.9 35L7.8 20.8H47.5L55.8 35Z" fill="#f58025"/><path d="M30 0H42.9L35.5 17.2H23.5Z" fill="#fff"/><path d="M23.7 19.5L30.2 19.5L29 21.9L41.7 21.9L36 34L29.4 34L30.6 28.1L21.2 28.1Z" fill="#fff"/><path d="M29.4 35.9L33.5 35.9L28.8 46.6L33.1 46.9L23.7 53.9L21.6 43.2L25.4 45.8Z" fill="#f58025"/></g></svg>
</body></html>
